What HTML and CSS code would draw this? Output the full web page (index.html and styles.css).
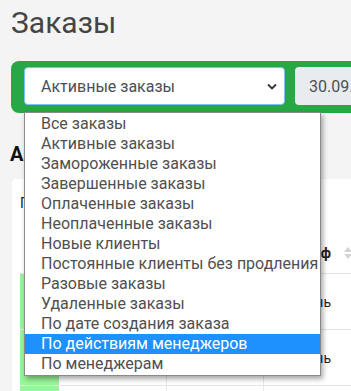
FILE: index.html
```html
<!DOCTYPE html>
<html lang="ru">
<head>
<meta charset="utf-8">
<link rel="stylesheet" href="styles.css">
</head>
<body>
<div class="page">
  <h1 class="title">Заказы</h1>
  <div class="filters">
    <div class="select">
      <span>Активные заказы</span>
      <svg class="chev" width="10" height="7" viewBox="0 0 10 7"><path d="M1 1.5 L5 5.5 L9 1.5" fill="none" stroke="#333" stroke-width="1.8"/></svg>
    </div>
    <div class="date">30.09.2020</div>
  </div>
  <h2 class="subtitle">Активные заказы</h2>
  <div class="card">
    <div class="card-top">Показано</div>
    <div class="table">
      <div class="row head">
        <div class="c c1"></div>
        <div class="c c2">Клиент</div>
        <div class="c c3">Дата</div>
        <div class="c c4">Тариф</div>
        <div class="c c5"><span class="sort"><i class="up"></i><i class="down"></i></span></div>
      </div>
      <div class="row">
        <div class="c c1 green"></div>
        <div class="c c2">Иванов</div>
        <div class="c c3">01.09</div>
        <div class="c c4">день</div>
        <div class="c c5"></div>
      </div>
      <div class="row">
        <div class="c c1 green"></div>
        <div class="c c2">Сидоров</div>
        <div class="c c3">02.09</div>
        <div class="c c4">день</div>
        <div class="c c5"></div>
      </div>
      <div class="row">
        <div class="c c1 green"></div>
        <div class="c c2"></div>
        <div class="c c3"></div>
        <div class="c c4"></div>
        <div class="c c5"></div>
      </div>
    </div>
  </div>
</div>
<ul class="menu">
  <li>Все заказы</li>
  <li>Активные заказы</li>
  <li>Замороженные заказы</li>
  <li>Завершенные заказы</li>
  <li>Оплаченные заказы</li>
  <li>Неоплаченные заказы</li>
  <li>Новые клиенты</li>
  <li>Постоянные клиенты без продления</li>
  <li>Разовые заказы</li>
  <li>Удаленные заказы</li>
  <li>По дате создания заказа</li>
  <li class="active">По действиям менеджеров</li>
  <li>По менеджерам</li>
</ul>
</body>
</html>
```

FILE: styles.css
```css
html, body {
  margin: 0;
  padding: 0;
}
body {
  background: #f4f4f4;
  font-family: Roboto, "Liberation Sans", sans-serif;
  width: 351px;
  height: 391px;
  overflow: hidden;
  position: relative;
}
.page {
  padding: 0 0 0 11px;
  width: 340px;
  overflow: hidden;
}
.title {
  margin: 0;
  padding-top: 5px;
  height: 61px;
  box-sizing: border-box;
  font-size: 30px;
  font-weight: 400;
  color: #454545;
  line-height: 35px;
}
.filters {
  display: flex;
  gap: 10px;
  background: #28a745;
  border-radius: 8px 0 0 8px;
  padding: 6px 0 8px 13px;
  height: 52px;
  box-sizing: border-box;
  overflow: hidden;
}
.select {
  flex: none;
  width: 261px;
  height: 38px;
  box-sizing: border-box;
  background: #fff;
  border: 1px solid #80bdff;
  border-radius: 4px;
  display: flex;
  align-items: center;
  justify-content: space-between;
  padding: 0 7px 0 16px;
  font-size: 16px;
  color: #495057;
}
.chev {
  display: block;
  margin-top: 1px;
}
.date {
  flex: none;
  width: 120px;
  height: 38px;
  box-sizing: border-box;
  background: #e9ecef;
  border-radius: 4px;
  padding: 0 14px;
  display: flex;
  align-items: center;
  font-size: 16px;
  color: #495057;
  white-space: nowrap;
}
.subtitle {
  margin: 0 0 0 -1px;
  padding-top: 29px;
  height: 66px;
  box-sizing: border-box;
  font-size: 20px;
  font-weight: 700;
  color: #111;
  line-height: 24px;
}
.card {
  background: #fff;
  margin-left: 1px;
  border-radius: 4px 0 0 0;
  padding: 16px 0 0 8px;
}
.card-top {
  font-size: 14px;
  color: #222;
  height: 37px;
}
.table {
  display: flex;
  flex-direction: column;
}
.row {
  display: flex;
  height: 56px;
  border-bottom: 1px solid #e4e4e4;
  box-sizing: border-box;
}
.row.head {
  height: 42px;
  font-weight: 700;
}
.c {
  flex: none;
  font-size: 14px;
  color: #222;
  display: flex;
  align-items: center;
  box-sizing: border-box;
  white-space: nowrap;
}
.c1 { width: 39px; }
.c2 { width: 108px; padding-left: 10px; border-right: 1px solid #e8e8e8; }
.c3 { width: 97px; padding-left: 10px; border-right: 1px solid #e8e8e8; }
.c4 { width: 67px; justify-content: flex-end; }
.c5 { width: 40px; padding-left: 13px; }
.head .c2, .head .c3 { border-right: none; }
.green { background: #98f598; }
.sort {
  display: inline-flex;
  flex-direction: column;
  gap: 2px;
}
.sort i {
  display: block;
  width: 0;
  height: 0;
  border-left: 4px solid transparent;
  border-right: 4px solid transparent;
}
.sort .up { border-bottom: 5px solid #d4d4d4; }
.sort .down { border-top: 5px solid #d4d4d4; }
.menu {
  position: absolute;
  left: 24px;
  top: 112px;
  width: 297px;
  margin: 0;
  padding: 1px 0;
  list-style: none;
  background: #fff;
  border: 1px solid #8a8a8a;
  box-sizing: border-box;
  box-shadow: 2px 3px 5px rgba(0, 0, 0, 0.35);
}
.menu li {
  height: 20px;
  line-height: 20px;
  padding-left: 16px;
  font-size: 16px;
  color: #505050;
  white-space: nowrap;
}
.menu li.active {
  background: #1e90ff;
  color: #fff;
}
```
